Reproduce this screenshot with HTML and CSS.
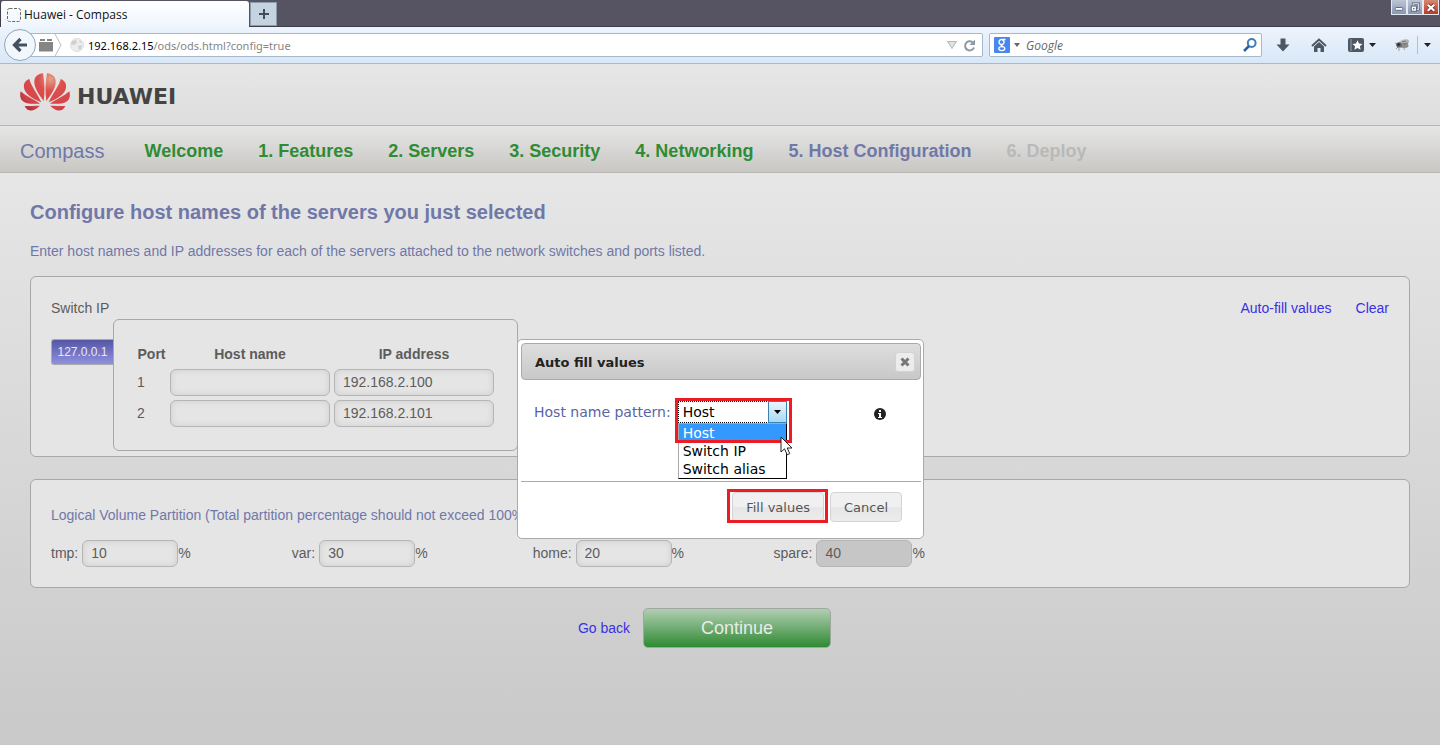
FILE: index.html
```html
<!DOCTYPE html>
<html lang="en">
<head>
<meta charset="utf-8">
<title>Huawei - Compass</title>
<link rel="stylesheet" href="styles.css">
</head>
<body>
<div class="tabstrip">
  <div class="tab">
    <svg width="14" height="14" viewBox="0 0 14 14"><rect x=".5" y=".5" width="13" height="13" rx="2" fill="none" stroke="#666" stroke-dasharray="3 1.5"/></svg>
    <span>Huawei - Compass</span>
  </div>
  <button class="newtab" aria-label="New tab"><svg width="12" height="12" viewBox="0 0 12 12"><path d="M6 1v10M1 6h10" stroke="#414c59" stroke-width="2"/></svg></button>
  <div class="winbtns">
    <button class="winbtn" aria-label="Minimize"><svg width="14" height="13" viewBox="0 0 15 13"><rect x="3.500" y="6.500" width="8" height="3" rx="1" fill="#fff" stroke="#596070"/></svg></button>
    <button class="winbtn" aria-label="Restore"><svg width="14" height="13" viewBox="0 0 15 13"><path d="M5.500 5V2.500h6v6H9.500" fill="none" stroke="#596070" stroke-width="2.500"/><path d="M5.500 5V2.500h6v6H9.500" fill="none" stroke="#fff"/><rect x="3.500" y="5" width="5.500" height="5.500" fill="#fff" stroke="#596070"/><rect x="5.500" y="7" width="1.500" height="1.500" fill="#596070"/></svg></button>
    <button class="winbtn winbtn-close" aria-label="Close window"><svg width="14" height="13" viewBox="0 0 15 13"><path d="M4 3.500l7 6.500M11 3.500L4 10" stroke="#6b3030" stroke-width="4"/><path d="M4 3.500l7 6.500M11 3.500L4 10" stroke="#fff" stroke-width="2.400"/></svg></button>
  </div>
</div>
<div class="toolbar">
  <button class="back" aria-label="Back"><svg width="32" height="32" viewBox="0 0 32 32"><circle cx="16" cy="16" r="15.500" fill="#f2f7fd" stroke="#90a4bb"/><path d="M16.500 10L10.500 16l6 6M11 16h12" fill="none" stroke="#44505e" stroke-width="3.200"/></svg></button>
  <div class="urlbar">
    <svg width="16" height="14" viewBox="0 0 16 14"><path d="M1 4h14v9.500H1zM2 1h5v2H2zM9 1h5v2H9z" fill="#858585"/></svg>
    <svg width="8" height="22" viewBox="0 0 8 22"><path d="M1 0l6 11-6 11" fill="none" stroke="#b9bec5"/></svg>
    <svg class="globe" width="14" height="14" viewBox="0 0 14 14"><circle cx="7" cy="7" r="6.500" fill="#ededed" stroke="#ddd"/><path d="M2 3l4-1 1 3-3 2-3-1zM8 8l4-1-1 4-2 1zM9 2l3 2-2 1z" fill="#cfcfcf"/></svg>
    <span class="url"><b>192.168.2.15</b>/ods/ods.html?config=true</span>
    <svg width="10" height="8" viewBox="0 0 10 8"><path d="M.500.500h9L5 7.500z" fill="#dfe3e7" stroke="#b0b6bd"/></svg>
    <svg width="13" height="13" viewBox="0 0 13 13"><path d="M9.500 3.200A4.600 4.600 0 1 0 11 8.500" fill="none" stroke="#8f99a4" stroke-width="2"/><path d="M12 .500v5.500H6.500z" fill="#8f99a4"/></svg>
  </div>
  <div class="search">
    <svg width="16" height="16" viewBox="0 0 16 16"><rect width="16" height="16" rx="1" fill="#4787ee"/><g fill="none" stroke="#fff" stroke-width="1.300"><circle cx="7.500" cy="5" r="2.500"/><path d="M8 2.500h3.500M7.500 7.500c-1 1 .5 1.500 1.800 2.200"/><ellipse cx="7.800" cy="11.600" rx="3" ry="2"/></g></svg>
    <svg width="6" height="4" viewBox="0 0 6 4"><path d="M0 0h6L3 4z" fill="#666"/></svg>
    <input type="text" placeholder="Google" aria-label="Search with Google">
    <svg width="14" height="14" viewBox="0 0 14 14"><circle cx="8.700" cy="5" r="3.900" fill="none" stroke="#3f7fb3" stroke-width="2"/><path d="M6 8l-5 5" stroke="#2b5f9e" stroke-width="2.500"/></svg>
  </div>
  <div class="tools">
    <svg width="14" height="14" viewBox="0 0 14 14"><path d="M4.500.500h5v6h4L7 13.500.500 6.500h4z" fill="#4d5864"/></svg>
    <svg width="16" height="14" viewBox="0 0 16 14"><path d="M1 8l7-6.500L15 8" fill="none" stroke="#4d5864" stroke-width="2"/><path d="M3 8.500l5-4.500 5 4.500V14H9.500v-4h-3v4H3z" fill="#4d5864"/></svg>
    <span class="toolpair"><svg width="16" height="14" viewBox="0 0 16 14"><rect width="16" height="14" rx="2" fill="#4d5864"/><path d="M3 1v12" stroke="#91a0ae"/><path d="M9.500 2.300l1.500 3.200 3.500.4-2.600 2.400.7 3.500-3.100-1.700-3.100 1.700.7-3.500-2.600-2.400 3.500-.4z" fill="#fff"/></svg>
    <svg width="7" height="4" viewBox="0 0 7 4"><path d="M0 0h7L3.500 4z" fill="#222"/></svg></span>
    <svg width="16" height="14" viewBox="0 0 16 14"><path d="M4 9l-2 2M5 10v3M9 9l2 3M3 6L1 5" stroke="#999"/><ellipse cx="10" cy="4.500" rx="5.500" ry="3" transform="rotate(-20 10 5)" fill="#b4b4b4"/><ellipse cx="10" cy="7.500" rx="4.500" ry="2.500" fill="#8d8d8d"/><circle cx="5" cy="7" r="2.800" fill="#666"/><circle cx="4.500" cy="6.500" r="1.300" fill="#222"/><path d="M8 4l4-1M9 6l5-1" stroke="#777"/></svg>
    <span class="toolend"><svg width="7" height="4" viewBox="0 0 7 4"><path d="M0 0h7L3.500 4z" fill="#222"/></svg></span>
  </div>
</div>
<header class="brand">
  <svg width="50" height="38" viewBox="0 0 150 114">
    <defs>
      <radialGradient id="petal" gradientUnits="userSpaceOnUse" cx="92" cy="18" r="120"><stop offset="0" stop-color="#e5a187"/><stop offset=".3" stop-color="#dc4f4c"/><stop offset=".75" stop-color="#d5434a"/><stop offset="1" stop-color="#a52d3b"/></radialGradient>
    </defs>
    <g fill="url(#petal)">
      <path d="M71 84C55 62 42 44 43 24 44 10 55 3 69 1 74 27 75 58 71 84z"/>
      <path d="M79 84C95 62 108 44 107 24 106 10 95 3 81 1 76 27 75 58 79 84z"/>
      <path d="M64 88C34 75 15 62 12 44 10 31 17 22 28 18 34 42 53 62 64 88z"/>
      <path d="M86 88C116 75 135 62 138 44 140 31 133 22 122 18 116 42 97 62 86 88z"/>
      <path d="M60 92C34 93 17 93 7 83 0 75-1 66 2 55 16 68 42 80 60 92z"/>
      <path d="M90 92C116 93 133 93 143 83 150 75 151 66 148 55 134 68 108 80 90 92z"/>
      <path d="M60 98C48 108 39 115 28 112 21 110 17 105 14 99 29 99 46 98 60 98z"/>
      <path d="M90 98C102 108 111 115 122 112 129 110 133 105 136 99 121 99 104 98 90 98z"/>
    </g>
  </svg>
  <span class="wordmark">HUAWEI</span>
</header>
<nav class="steps">
  <span class="product">Compass</span>
  <a href="#welcome">Welcome</a>
  <a href="#features">1. Features</a>
  <a href="#servers">2. Servers</a>
  <a href="#security">3. Security</a>
  <a href="#networking">4. Networking</a>
  <a class="current" href="#hosts">5. Host Configuration</a>
  <a class="pending" href="#deploy">6. Deploy</a>
</nav>
<main class="content">
  <h1>Configure host names of the servers you just selected</h1>
  <p class="intro">Enter host names and IP addresses for each of the servers attached to the network switches and ports listed.</p>
  <section class="panel hosts">
    <div class="hosts-head"><span>Switch IP</span><div class="hosts-links"><a href="#fill">Auto-fill values</a><a href="#clear">Clear</a></div></div>
    <div class="switch">
      <button class="chip">127.0.0.1</button>
      <div class="ports">
        <table>
          <thead><tr><th>Port</th><th>Host name</th><th>IP address</th></tr></thead>
          <tbody>
            <tr><td>1</td><td><input type="text" aria-label="Host name, port 1"></td><td><input type="text" aria-label="IP address, port 1" value="192.168.2.100"></td></tr>
            <tr><td>2</td><td><input type="text" aria-label="Host name, port 2"></td><td><input type="text" aria-label="IP address, port 2" value="192.168.2.101"></td></tr>
          </tbody>
        </table>
      </div>
    </div>
  </section>
  <section class="panel volumes">
    <p>Logical Volume Partition (Total partition percentage should not exceed 100%)</p>
    <div class="volume-grid">
      <div class="volume"><label for="tmp">tmp:</label><input id="tmp" type="text" value="10"><span>%</span></div>
      <div class="volume"><label for="var">var:</label><input id="var" type="text" value="30"><span>%</span></div>
      <div class="volume"><label for="home">home:</label><input id="home" type="text" value="20"><span>%</span></div>
      <div class="volume"><label for="spare">spare:</label><input id="spare" type="text" value="40" disabled><span>%</span></div>
    </div>
  </section>
  <div class="actions"><a href="#back">Go back</a><button class="continue">Continue</button></div>
</main>
<div class="dialog" role="dialog" aria-labelledby="dialog-title">
  <div class="dialog-title"><h2 id="dialog-title">Auto fill values</h2><button class="close" aria-label="Close"><svg width="10" height="10" viewBox="0 0 10 10"><path d="M1.500 1.500l7 7M8.500 1.500l-7 7" stroke="#777" stroke-width="3"/></svg></button></div>
  <div class="dialog-body">
    <label for="pattern">Host name pattern:</label>
    <div class="combo">
      <select id="pattern"><option>Host</option><option>Switch IP</option><option>Switch alias</option></select>
      <span class="combo-arrow"><svg width="7" height="4" viewBox="0 0 7 4"><path d="M0 0h7L3.500 4z" fill="#000"/></svg></span>
      <ul class="options"><li class="selected">Host</li><li>Switch IP</li><li>Switch alias</li></ul>
      <span class="mark mark-combo"></span>
      <svg class="pointer" width="13" height="20" viewBox="0 0 13 20"><path d="M1 1v15l3.500-3.200 2.700 6 2.600-1.200L7.200 12H12z" fill="#fff" stroke="#222"/></svg>
    </div>
    <svg class="info" width="12" height="12" viewBox="0 0 12 12"><circle cx="6" cy="6" r="6" fill="#222"/><path d="M5 2h2v2H5zM4 5h3v4h1v1H4V9h1V6H4z" fill="#fff"/></svg>
  </div>
  <div class="dialog-foot">
    <div class="marked"><button>Fill values</button><span class="mark mark-fill"></span></div>
    <button>Cancel</button>
  </div>
</div>
</body>
</html>
```
FILE: styles.css
```css
* { box-sizing: border-box; }
body {
  margin: 0;
  min-height: 100vh;
  display: flex;
  flex-direction: column;
  position: relative;
  font: 14px/16px "Liberation Sans", Arial, sans-serif;
  color: #5c5c5c;
}
button, input, select { font: inherit; color: inherit; margin: 0; }
svg { display: block; flex: none; }
a { color: #3a30e6; text-decoration: none; }

/* Browser chrome */
.tabstrip {
  display: flex;
  height: 27px;
  background: #565463;
  border-bottom: 1px solid #3f3d4b;
  font: 12px/16px "Open Sans", sans-serif;
}
.tab {
  display: flex;
  align-items: center;
  gap: 3px;
  width: 249px;
  height: 27px;
  margin-top: 1px;
  padding: 0 6px;
  background: linear-gradient(#fff, #eef5fd);
  border-left: 1px solid #3f3d4b;
  border-radius: 3px 3px 0 0;
  color: #111;
}
.newtab {
  display: grid;
  place-items: center;
  width: 27px;
  height: 24px;
  margin: 2px 0 0 1px;
  padding: 0;
  border: 1px solid #8d9cac;
  background: #c5d3e0;
}
.winbtns { display: flex; margin: 0 1px 0 auto; height: 15px; }
.winbtn {
  width: 16px;
  height: 15px;
  padding: 0;
  border: 1px solid #e4e8f0;
  border-top: 0;
  background: linear-gradient(#bdc5d6, #8998b8);
}
.winbtn-close { background: linear-gradient(#d98873, #b83a24); }
.toolbar {
  display: flex;
  align-items: center;
  height: 37px;
  padding: 0 9px 0 4px;
  background: linear-gradient(#ecf4fd, #d9e7f6);
  border-bottom: 1px solid #a5bacf;
  font: 12px/16px "Open Sans", sans-serif;
}
.back { padding: 0; border: 0; background: none; z-index: 1; }
.urlbar, .search {
  display: flex;
  align-items: center;
  height: 24px;
  background: #fff;
  border: 1px solid #a5b8cc;
  border-radius: 2px;
}
.urlbar { flex: 1; margin-left: -8px; padding: 0 6px 0 9px; }
.globe { margin: 0 4px 0 8px; }
.url { flex: 1; padding-top: 1px; color: #858585; font: 11px/16px "Noto Sans", sans-serif; }
.url b { color: #000; font-weight: 400; }
.urlbar svg:last-child { margin-left: 6px; }
.search { width: 273px; margin-left: 6px; padding: 0 4px; }
.search svg + svg { margin-left: 4px; }
.search input {
  flex: 1;
  min-width: 0;
  margin-left: 6px;
  padding: 1px 0 0;
  border: 0;
  background: none;
  font: italic 12px/16px "Open Sans", sans-serif;
}
.search input::placeholder { color: #666; opacity: 1; }
.tools { display: flex; align-items: center; gap: 21px; margin-left: 14px; }
.toolpair { display: flex; align-items: center; gap: 5px; margin-right: -3px; }
.toolend { margin-left: -14px; padding: 7px 0 7px 6px; border-left: 1px solid #b3c0ce; }

/* Page header */
.brand {
  display: flex;
  align-items: center;
  gap: 7px;
  height: 61px;
  padding: 0 20px 6px;
  background: linear-gradient(#e6e6e6, #dedede);
}
.wordmark { font: bold 22px/24px "DejaVu Sans", sans-serif; color: #444; padding-top: 10px; }
.steps {
  display: flex;
  align-items: center;
  gap: 35px;
  height: 48px;
  padding: 3px 20px 0;
  background: linear-gradient(#e6e6e6, #c8c7c3);
  border: solid #b9b8b2;
  border-width: 1px 0;
  font-size: 18px;
  line-height: 24px;
}
.steps a { color: #2f8c34; font-weight: bold; }
.steps .current { color: #7078a8; }
.steps .pending { color: #b9b9b9; }
.product { font-size: 20px; color: #7078a8; margin-right: 5px; }

/* Page content */
.content {
  flex: 1;
  padding: 27px 30px 30px;
  background: linear-gradient(#e6e6e6, #c9c9c9);
}
h1 { margin: 0 0 19px; font-size: 20px; line-height: 24px; color: #7078a8; }
.intro { margin: 0 0 17px; color: #7078a8; }
.panel {
  padding: 20px;
  background: #e5e5e5;
  border: 1px solid #a8a8a8;
  border-radius: 6px;
}
.hosts { padding: 23px 20px 5px; margin-bottom: 22px; }
.hosts-head { display: flex; justify-content: space-between; margin-bottom: 3px; }
.hosts-links { display: flex; gap: 24px; }
.switch { display: flex; align-items: flex-start; }
.chip {
  width: 62px;
  height: 26px;
  margin-top: 20px;
  padding: 0;
  border: 1px solid #aaa;
  border-right: 0;
  border-radius: 3px 0 0 3px;
  background: linear-gradient(#5455a5, #9091de);
  color: #e8e8f4;
  font-size: 12px;
}
.ports { padding: 20px; border: 1px solid #a8a8a8; border-radius: 6px; }
table { border-spacing: 2px; }
th, td { padding: 1px; text-align: left; }
td:first-child { padding-bottom: 3px; }
th { height: 24px; text-align: center; }
th:first-child { width: 31px; }
.ports input { width: 160px; }
.ports input, .volume input {
  display: block;
  height: 27px;
  padding: 0 8px 2px;
  border: 1px solid #b5b5b5;
  border-radius: 6px;
  background: #e5e5e5;
  box-shadow: inset 0 0 6px #cdcdcd;
}
.volumes { padding-top: 27px; }
.volumes p { margin: 0 0 17px; color: #7078a8; }
.volume-grid { display: grid; grid-template-columns: repeat(4, 18%); }
.volume { display: flex; align-items: center; }
.volume label { margin-right: 4px; }
.volume label, .volume span { padding-bottom: 2px; }
.volume input { width: 96px; }
.volume input:disabled { background: #c6c6c6; box-shadow: none; }
.actions {
  display: flex;
  align-items: center;
  justify-content: center;
  gap: 13px;
  margin-top: 20px;
  padding-right: 31px;
}
.continue {
  width: 188px;
  height: 40px;
  border: 1px solid #9fa89f;
  border-radius: 5px;
  background: linear-gradient(#b2ceb3, #2f8a33);
  color: #e8ece8;
  font-size: 18px;
}

/* Auto-fill dialog */
.dialog {
  position: absolute;
  top: 339px;
  left: calc(50% - 203px);
  width: 407px;
  padding: 3px 2px 16px 3px;
  border: 1px solid #aaa;
  border-radius: 5px;
  background: #fff;
  font: 14px/18px "DejaVu Sans", Verdana, sans-serif;
}
.dialog-title {
  display: flex;
  align-items: center;
  justify-content: space-between;
  height: 37px;
  padding: 0 5px 0 13px;
  border: 1px solid #aaa;
  border-radius: 4px;
  background: linear-gradient(#dedede, #c8c8c8);
}
h2 { margin: 0; padding-top: 2px; font-size: 13px; line-height: 18px; color: #222; }
.close {
  display: grid;
  place-items: center;
  width: 20px;
  height: 20px;
  padding: 0;
  border: 1px solid #d3d3d3;
  border-radius: 3px;
  background: #ececec;
}
.dialog-body {
  display: flex;
  align-items: flex-start;
  height: 101px;
  padding: 21px 35px 0 13px;
  color: #5a64a6;
}
.dialog-body label { padding-top: 2px; }
.combo { position: relative; margin-left: 7px; color: #000; }
.combo select {
  display: block;
  appearance: none;
  width: 109px;
  height: 22px;
  padding: 0 4px;
  border: 1px dotted #000;
  border-radius: 0;
  background: #fff;
}
.combo-arrow {
  position: absolute;
  top: 0;
  right: 0;
  display: grid;
  place-items: center;
  width: 19px;
  height: 22px;
  border: 1px solid #3c7fb1;
  background: linear-gradient(#eaf6fd, #a7d9f5);
  pointer-events: none;
}
.options {
  position: absolute;
  top: 22px;
  left: 0;
  width: 109px;
  margin: 0;
  padding: 0;
  list-style: none;
  background: #fff;
  border: 1px solid #000;
  border-top-color: #aaa;
  border-left-color: #aaa;
}
.options li { padding-left: 4px; white-space: nowrap; }
.options .selected { background: #3399ff; color: #fff; }
.mark { position: absolute; border: 3px solid #ed1c24; pointer-events: none; }
.mark-combo { top: -3px; left: -3px; width: 117px; height: 45px; }
.pointer { position: absolute; top: 35px; left: 102px; }
.info { margin: 7px 0 0 auto; }
.dialog-foot {
  display: flex;
  justify-content: flex-end;
  gap: 6px;
  padding: 10px 19px 0 0;
  border-top: 1px solid #aaa;
}
.dialog-foot button {
  height: 30px;
  padding: 1px 13px 0;
  border: 1px solid #d3d3d3;
  border-radius: 4px;
  background: linear-gradient(#f0f0f0 50%, #e6e6e6 50%, #ececec);
  color: #555;
  font-size: 13px;
}
.marked { position: relative; }
.mark-fill { inset: -3px -4px -1px -5px; }
```
